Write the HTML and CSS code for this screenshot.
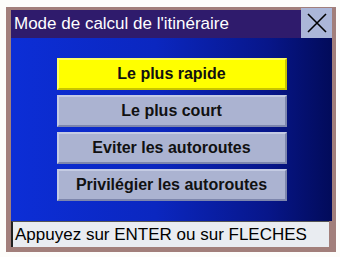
FILE: index.html
```html
<!DOCTYPE html>
<html lang="fr">
<head>
<meta charset="utf-8">
<link rel="stylesheet" href="styles.css">
</head>
<body>
<div class="frame">
  <div class="titlebar">
    <span class="title">Mode de calcul de l'itinéraire</span>
    <div class="close">
      <svg width="22" height="22" viewBox="0 0 22 22"><path d="M2 2 L20 20 M20 2 L2 20" stroke="#000" stroke-width="1.6" fill="none"/></svg>
    </div>
  </div>
  <div class="panel">
    <div class="menu">
      <div class="btn selected">Le plus rapide</div>
      <div class="btn">Le plus court</div>
      <div class="btn">Eviter les autoroutes</div>
      <div class="btn">Privilégier les autoroutes</div>
    </div>
  </div>
  <div class="status">Appuyez sur ENTER ou sur FLECHES</div>
</div>
</body>
</html>
```
FILE: styles.css
```css
html, body {
  margin: 0;
  padding: 0;
  background: #fdfdfb;
  font-family: "Liberation Sans", Arial, sans-serif;
}
.frame {
  margin: 7px 0 0 6px;
  width: 321px;
  height: 237px;
  background: #a27f7b;
  padding: 3px 4px 5px 5px;
  display: flex;
  flex-direction: column;
}
.titlebar {
  height: 28px;
  background: #2f1b6c;
  display: flex;
  align-items: center;
  justify-content: space-between;
  flex: none;
}
.title {
  color: #fff;
  font-size: 17px;
  padding-left: 3px;
}
.close {
  width: 31px;
  height: 30px;
  margin-top: -2px;
  background: #abb6d8;
  display: flex;
  align-items: center;
  justify-content: center;
}
.panel {
  flex: 1;
  background: linear-gradient(to right, #0c2ed6 0%, #0b27c0 45%, #07168a 80%, #020b5a 100%);
  display: flex;
  justify-content: center;
  padding-top: 20px;
}
.menu {
  width: 230px;
  display: flex;
  flex-direction: column;
  gap: 5px;
}
.btn {
  height: 32px;
  box-sizing: border-box;
  background: #abb3d1;
  border-top: 2px solid #c4cbe3;
  border-left: 2px solid #c4cbe3;
  border-bottom: 2px solid #7d86ad;
  border-right: 2px solid #7d86ad;
  display: flex;
  align-items: center;
  justify-content: center;
  font-weight: bold;
  font-size: 16px;
  color: #111;
}
.btn.selected {
  background: #ffff00;
  border-color: #ffff60 #c8c400 #c8c400 #ffff60;
}
.status {
  height: 26px;
  box-sizing: border-box;
  background: #e9ecf1;
  border-top: 1px solid #555;
  border-left: 2px solid #222;
  font-size: 17px;
  color: #000;
  display: flex;
  align-items: center;
  padding-left: 2px;
  flex: none;
  margin-right: 3px;
}
```
